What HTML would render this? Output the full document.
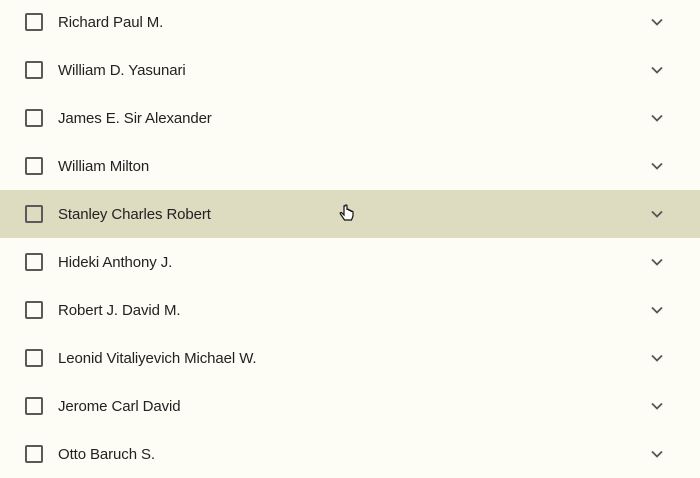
<!DOCTYPE html>
<html><head><style>
body{margin:0;width:700px;height:474px;overflow:hidden;background:#fdfdf6;font-family:"Liberation Sans",sans-serif;}
.list{position:absolute;top:-2px;left:0;width:700px}
.row{height:48px;position:relative}
.row.h{background:#dddbc0}
.cb{position:absolute;left:25px;top:15px;width:14px;height:14px;border:2px solid #5a5a5a;border-radius:2px}
.t{position:absolute;left:58px;top:16px;font-size:15px;color:#222;letter-spacing:-0.1px}
.c{position:absolute;left:651px;top:20px}
</style></head><body>
<div class="list">
<div class="row"><div class="cb"></div><div class="t">Richard Paul M.</div><svg class="c" width="12" height="8"><path d="M1 1.5l5 5 5-5" stroke="#555" stroke-width="1.8" fill="none"/></svg></div>
<div class="row"><div class="cb"></div><div class="t">William D. Yasunari</div><svg class="c" width="12" height="8"><path d="M1 1.5l5 5 5-5" stroke="#555" stroke-width="1.8" fill="none"/></svg></div>
<div class="row"><div class="cb"></div><div class="t">James E. Sir Alexander</div><svg class="c" width="12" height="8"><path d="M1 1.5l5 5 5-5" stroke="#555" stroke-width="1.8" fill="none"/></svg></div>
<div class="row"><div class="cb"></div><div class="t">William Milton</div><svg class="c" width="12" height="8"><path d="M1 1.5l5 5 5-5" stroke="#555" stroke-width="1.8" fill="none"/></svg></div>
<div class="row h"><div class="cb"></div><div class="t">Stanley Charles Robert</div><svg style="position:absolute;left:339px;top:14px" width="16" height="20" viewBox="0 0 16 20"><path d="M5 2v9l-2-2c-1-1-2.5 0-1.5 1l4 6h7l1.5-4v-4c0-1-2-1-2 0v-1c0-1-2-1-2 0v-1c0-1-2-1-2 0V2c0-1.3-2-1.3-2 0z" fill="#fff" stroke="#111" stroke-width="1.2"/></svg><svg class="c" width="12" height="8"><path d="M1 1.5l5 5 5-5" stroke="#555" stroke-width="1.8" fill="none"/></svg></div>
<div class="row"><div class="cb"></div><div class="t">Hideki Anthony J.</div><svg class="c" width="12" height="8"><path d="M1 1.5l5 5 5-5" stroke="#555" stroke-width="1.8" fill="none"/></svg></div>
<div class="row"><div class="cb"></div><div class="t">Robert J. David M.</div><svg class="c" width="12" height="8"><path d="M1 1.5l5 5 5-5" stroke="#555" stroke-width="1.8" fill="none"/></svg></div>
<div class="row"><div class="cb"></div><div class="t">Leonid Vitaliyevich Michael W.</div><svg class="c" width="12" height="8"><path d="M1 1.5l5 5 5-5" stroke="#555" stroke-width="1.8" fill="none"/></svg></div>
<div class="row"><div class="cb"></div><div class="t">Jerome Carl David</div><svg class="c" width="12" height="8"><path d="M1 1.5l5 5 5-5" stroke="#555" stroke-width="1.8" fill="none"/></svg></div>
<div class="row"><div class="cb"></div><div class="t">Otto Baruch S.</div><svg class="c" width="12" height="8"><path d="M1 1.5l5 5 5-5" stroke="#555" stroke-width="1.8" fill="none"/></svg></div>
</div>
</body></html>
